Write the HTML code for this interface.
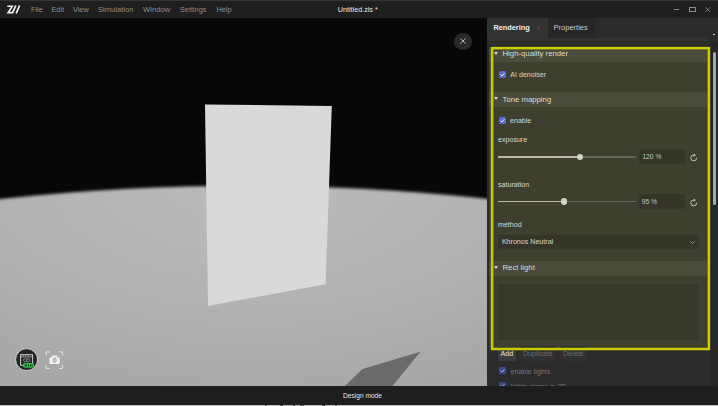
<!DOCTYPE html>
<html><head><meta charset="utf-8">
<style>
*{margin:0;padding:0;box-sizing:border-box}
html,body{width:718px;height:406px;overflow:hidden;background:#1e1e1e;font-family:"Liberation Sans",sans-serif}
.a{position:absolute;white-space:pre;line-height:1}
#title{position:absolute;left:0;top:0;width:718px;height:18px;background:#1f1f1f;border-top:1px solid #353535}
.menu{color:#8e8e8e;font-size:7.3px;top:4.9px}
#vp{position:absolute;left:0;top:18px;width:487px;height:368px;background:#070707;overflow:hidden}
#panel{position:absolute;left:487px;top:18px;width:231px;height:368px;background:#2b2b2b;overflow:hidden}
#status{position:absolute;left:0;top:386px;width:718px;height:19px;background:#1e1e1e}
#bot{position:absolute;left:0;top:405px;width:718px;height:1px;background:#c4c4c4}
.hdr{position:absolute;left:2px;width:221px;background:#4a4b3a}
.lbl{color:#d8d8cc;font-size:7.1px}
.htxt{color:#dcdcd0;font-size:7.75px}
.tri{position:absolute;width:0;height:0;border-left:2.15px solid transparent;border-right:2.15px solid transparent;border-top:3.3px solid #d8d8cc}
.cb{position:absolute;width:7px;height:7px;border-radius:1.5px;background:#5566cc}
.inp{position:absolute;background:#35352a;border-radius:2px}
</style></head><body>
<div id="title">
  <svg class="a" style="left:0;top:-1px" width="24" height="18" viewBox="0 0 24 18">
    <path d="M7.3 6.2 H12.3 L8.1 12.6 H12.2" fill="none" stroke="#f4f4f4" stroke-width="1.6" stroke-linejoin="miter"/>
    <path d="M15.8 5.5 L12.3 13.3 M19.6 5.5 L16.2 13.3" fill="none" stroke="#f4f4f4" stroke-width="1.7"/>
  </svg>
  <div class="a menu" style="left:31px">File</div>
  <div class="a menu" style="left:51.5px">Edit</div>
  <div class="a menu" style="left:73px">View</div>
  <div class="a menu" style="left:98px;font-size:7.6px">Simulation</div>
  <div class="a menu" style="left:143px;font-size:7.65px">Window</div>
  <div class="a menu" style="left:180px">Settings</div>
  <div class="a menu" style="left:216.5px">Help</div>
  <div class="a" style="left:337.8px;top:4.9px;color:#e8e8e8;font-size:7.2px">Untitled.zls *</div>
  <div class="a" style="left:674px;top:8px;width:5px;height:1px;background:#8c8c8c"></div>
  <div class="a" style="left:688.6px;top:6px;width:7.1px;height:5px;border:1px solid #8c8c8c;border-top-width:1.8px;border-radius:0.5px"></div>
  <svg class="a" style="left:705px;top:5.8px" width="6" height="6" viewBox="0 0 6 6"><path d="M0.2 0.2 L5.1 5.1 M5.1 0.2 L0.2 5.1" stroke="#8c8c8c" stroke-width="0.8"/></svg>
</div>

<div id="vp">
  <svg width="487" height="368" style="position:absolute;left:0;top:0">
    <defs>
      <filter id="bl" x="-10%" y="-10%" width="120%" height="120%"><feGaussianBlur stdDeviation="1.5"/></filter>
      <radialGradient id="fl" gradientUnits="userSpaceOnUse" cx="250" cy="160" r="480" gradientTransform="translate(250 160) scale(1 0.5) translate(-250 -160)">
        <stop offset="0" stop-color="#bbbbbb"/>
        <stop offset="0.45" stop-color="#b4b4b4"/>
        <stop offset="1" stop-color="#a5a5a5"/>
      </radialGradient>
    </defs>
    <ellipse cx="245" cy="322.6" rx="600" ry="154.8" fill="url(#fl)" filter="url(#bl)"/>
    <polygon points="205,86.4 331.8,87.9 325.6,266.2 208,287.9" fill="#d9d9d7"/>
    <polygon points="345,368 362.5,350.9 420.5,333.7 392.5,368" fill="#6a6a6a"/>
  </svg>
  <div class="a" style="left:454px;top:14.5px;width:17.8px;height:17.8px;border-radius:50%;background:#2a2a2e"></div>
  <svg class="a" style="left:460px;top:20.4px" width="6" height="6" viewBox="0 0 6 6"><path d="M0.4 0.4 L5.6 5.6 M5.6 0.4 L0.4 5.6" stroke="#d8d8d8" stroke-width="0.8"/></svg>
  <!-- bottom left icons -->
  <svg class="a" style="left:14px;top:329px" width="26" height="26" viewBox="0 0 26 26">
    <circle cx="12.6" cy="12.6" r="11" fill="#242424" stroke="#e6e6e6" stroke-width="0.9"/>
    <rect x="6.6" y="7.7" width="12" height="10.6" fill="none" stroke="#cfcfcf" stroke-width="1"/>
    <path d="M6.6 9.9 H18.6" stroke="#cfcfcf" stroke-width="0.7"/>
    <path d="M8.6 8.8 H9.8 M11.2 8.8 H12.4 M13.8 8.8 H15" stroke="#cfcfcf" stroke-width="0.6"/>
    <circle cx="11.2" cy="13.2" r="1.6" fill="none" stroke="#9a9a9a" stroke-width="0.8"/>
    <circle cx="14.2" cy="13.2" r="1.6" fill="none" stroke="#9a9a9a" stroke-width="0.8"/>
    <rect x="8.9" y="16" width="11.2" height="4.8" rx="2.2" fill="#2bc943"/>
    <path d="M11.2 17.3 V19.5 M12.4 17.3 V19.5 M14.6 17.3 V19.5 M16.6 17.3 V19.5 M18 17.3 V19.5" stroke="#0d2a10" stroke-width="0.9"/>
  </svg>
  <svg class="a" style="left:45px;top:333px" width="19" height="19" viewBox="0 0 19 19">
    <path d="M1.2 4.6 V0.9 H4.6 M14 0.9 H17.6 V4.6 M17.6 13.8 V17.5 H14 M4.6 17.5 H1.2 V13.8" fill="none" stroke="#e2e2e2" stroke-width="1"/>
    <rect x="4.4" y="6.3" width="10.3" height="6.8" rx="1.2" fill="#f0f0f0"/>
    <path d="M6.6 6.6 L7.4 4.4 H11.8 L12.6 6.6 Z" fill="#f0f0f0"/>
    <ellipse cx="9.6" cy="9.3" rx="1.5" ry="1.9" fill="none" stroke="#7a7a7a" stroke-width="0.9"/>
  </svg>
</div>

<div id="panel">
  <!-- tabs -->
  <div class="a" style="left:0;top:0;width:61px;height:20px;background:#333333"></div>
  <div class="a" style="left:61px;top:0;width:47px;height:20px;background:#262626"></div>
  <div class="a" style="left:6.4px;top:5.8px;color:#f0f0f0;font-size:7.35px;font-weight:bold">Rendering</div>
  <svg class="a" style="left:50px;top:8.4px" width="3" height="3" viewBox="0 0 3 3"><path d="M0.2 0.2 L2.8 2.8 M2.8 0.2 L0.2 2.8" stroke="#5e5e5e" stroke-width="0.7"/></svg>
  <div class="a" style="left:66.6px;top:5.8px;color:#c8c8c8;font-size:7.5px">Properties</div>
  <div class="a" style="left:2px;top:20px;width:219px;height:3px;background:#323232"></div>
  <div class="a" style="left:226px;top:16px;width:2px;height:1px;background:#ccc"></div>
  <!-- scrollbar -->
  <div class="a" style="left:224px;top:24px;width:7px;height:344px;background:#262626"></div>
  <div class="a" style="left:226px;top:34px;width:3px;height:153px;border-radius:2px;background:#a4a4bc"></div>

  <!-- olive content -->
  <div class="a" style="left:2px;top:29px;width:221px;height:301px;background:#3f3f2f"></div>
  <div class="hdr" style="top:31px;height:13px"></div>
  <div class="tri" style="left:6.8px;top:33.9px"></div>
  <div class="a htxt" style="left:15.5px;top:31.8px">High-quality render</div>
  <svg class="a" style="left:12.2px;top:53.2px" width="7" height="7" viewBox="0 0 7 7"><rect x="0" y="0" width="7" height="7" rx="1.6" fill="#5a6ad6"/><path d="M1.6 3.6 L3 5 L5.5 2.2" fill="none" stroke="#ffffff" stroke-width="0.9"/></svg>
  <div class="a lbl" style="left:23.3px;top:54.3px">AI denoiser</div>

  <div class="hdr" style="top:73.6px;height:15.4px"></div>
  <div class="tri" style="left:6.8px;top:78.7px"></div>
  <div class="a htxt" style="left:15.5px;top:77.6px">Tone mapping</div>
  <svg class="a" style="left:12.2px;top:99.1px" width="7" height="7" viewBox="0 0 7 7"><rect x="0" y="0" width="7" height="7" rx="1.6" fill="#5a6ad6"/><path d="M1.6 3.6 L3 5 L5.5 2.2" fill="none" stroke="#ffffff" stroke-width="0.9"/></svg>
  <div class="a lbl" style="left:23px;top:100px">enable</div>

  <div class="a lbl" style="left:11px;top:119.1px">exposure</div>
  <div class="a" style="left:11px;top:138.2px;width:82px;height:1.7px;background:#b8b8a4"></div>
  <div class="a" style="left:93px;top:138.2px;width:55.7px;height:1.7px;background:#66665a"></div>
  <div class="a" style="left:89.6px;top:135.7px;width:6.7px;height:6.7px;border-radius:50%;background:#d4d4c4"></div>
  <div class="inp" style="left:151.6px;top:131.3px;width:46.4px;height:15px"></div>
  <div class="a lbl" style="left:155.4px;top:135.9px;font-size:6.7px;color:#cacabc">120 %</div>
  <svg class="a" style="left:203.1px;top:135.7px" width="8" height="8" viewBox="0 0 8 8"><path d="M6.6 3.6 A2.9 2.9 0 1 1 4.2 1.1" fill="none" stroke="#d0d0c4" stroke-width="0.9"/><path d="M3.6 -0.2 L5.4 1.2 L3.6 2.4" fill="none" stroke="#d0d0c4" stroke-width="0.9"/></svg>

  <div class="a lbl" style="left:11px;top:164.1px">saturation</div>
  <div class="a" style="left:11px;top:182.8px;width:66px;height:1.7px;background:#b8b8a4"></div>
  <div class="a" style="left:77px;top:182.8px;width:71.7px;height:1.7px;background:#66665a"></div>
  <div class="a" style="left:73.6px;top:180.3px;width:6.7px;height:6.7px;border-radius:50%;background:#d4d4c4"></div>
  <div class="inp" style="left:151.6px;top:176.3px;width:46.4px;height:15px"></div>
  <div class="a lbl" style="left:154.7px;top:180.9px;font-size:6.7px;color:#cacabc">95 %</div>
  <svg class="a" style="left:203.1px;top:180.7px" width="8" height="8" viewBox="0 0 8 8"><path d="M6.6 3.6 A2.9 2.9 0 1 1 4.2 1.1" fill="none" stroke="#d0d0c4" stroke-width="0.9"/><path d="M3.6 -0.2 L5.4 1.2 L3.6 2.4" fill="none" stroke="#d0d0c4" stroke-width="0.9"/></svg>

  <div class="a lbl" style="left:11px;top:204.1px">method</div>
  <div class="inp" style="left:11px;top:217px;width:200.5px;height:13.7px"></div>
  <div class="a lbl" style="left:14.9px;top:221.1px">Khronos Neutral</div>
  <svg class="a" style="left:202.6px;top:222.6px" width="5" height="3" viewBox="0 0 5 3"><path d="M0.4 0.4 L2.5 2.5 L4.6 0.4" fill="none" stroke="#c0c0b4" stroke-width="0.7"/></svg>

  <div class="hdr" style="left:2px;top:243.1px;height:15px"></div>
  <div class="tri" style="left:6.8px;top:248.1px"></div>
  <div class="a htxt" style="left:15.5px;top:246px">Rect light</div>
  <div class="inp" style="left:11px;top:265.8px;width:199.8px;height:56.6px;border-radius:0;background:#36362a"></div>


  <!-- below -->
  <div class="a" style="left:11px;top:327.6px;width:17.7px;height:15.2px;background:#3c3c3c;border-radius:2px"></div>
  <div class="a" style="left:33.4px;top:327.6px;width:35.2px;height:15.2px;background:#303030;border-radius:2px"></div>
  <div class="a" style="left:73px;top:327.6px;width:26.7px;height:15.2px;background:#303030;border-radius:2px"></div>
  <div class="a" style="left:13.5px;top:332.5px;color:#e8e8e8;font-size:7.1px">Add</div>
  <div class="a" style="left:36px;top:332.5px;color:#6a6a6a;font-size:7.1px">Duplicate</div>
  <div class="a" style="left:76px;top:332.5px;color:#6a6a6a;font-size:7.1px">Delete</div>
  <svg class="a" style="left:11.7px;top:349px" width="7" height="7" viewBox="0 0 7 7"><rect x="0" y="0" width="7" height="7" rx="1.3" fill="#3c4890"/><path d="M1.6 3.6 L3 5 L5.5 2.2" fill="none" stroke="#b0b8d8" stroke-width="0.9"/></svg>
  <div class="a" style="left:23.5px;top:350.5px;color:#767676;font-size:7.1px">enable lights</div>
  <svg class="a" style="left:11.7px;top:364px" width="7" height="7" viewBox="0 0 7 7"><rect x="0" y="0" width="7" height="7" rx="1.3" fill="#3c4890"/><path d="M1.6 3.6 L3 5 L5.5 2.2" fill="none" stroke="#b0b8d8" stroke-width="0.9"/></svg>
  <div class="a" style="left:23.5px;top:365.8px;color:#767676;font-size:7.1px">lights gizmo in 3D</div>
  <svg class="a" style="left:0;top:0" width="231" height="368"><rect x="5.1" y="30.1" width="216.8" height="300.9" fill="none" stroke="#cccc00" stroke-width="2.5"/></svg>
</div>

<div id="status">
  <div class="a" style="left:343px;top:6.8px;color:#e6e6e6;font-size:6.62px">Design mode</div>
</div>
<div id="bot">
  <div class="a" style="left:265px;top:0;width:2px;height:1px;background:#666"></div>
  <div class="a" style="left:280px;top:0;width:3px;height:1px;background:#555"></div>
  <div class="a" style="left:293px;top:0;width:2px;height:1px;background:#555"></div>
  <div class="a" style="left:300px;top:0;width:4px;height:1px;background:#666"></div>
  <div class="a" style="left:322px;top:0;width:3px;height:1px;background:#555"></div>
  <div class="a" style="left:335px;top:0;width:2px;height:1px;background:#666"></div>
</div>
</body></html>
